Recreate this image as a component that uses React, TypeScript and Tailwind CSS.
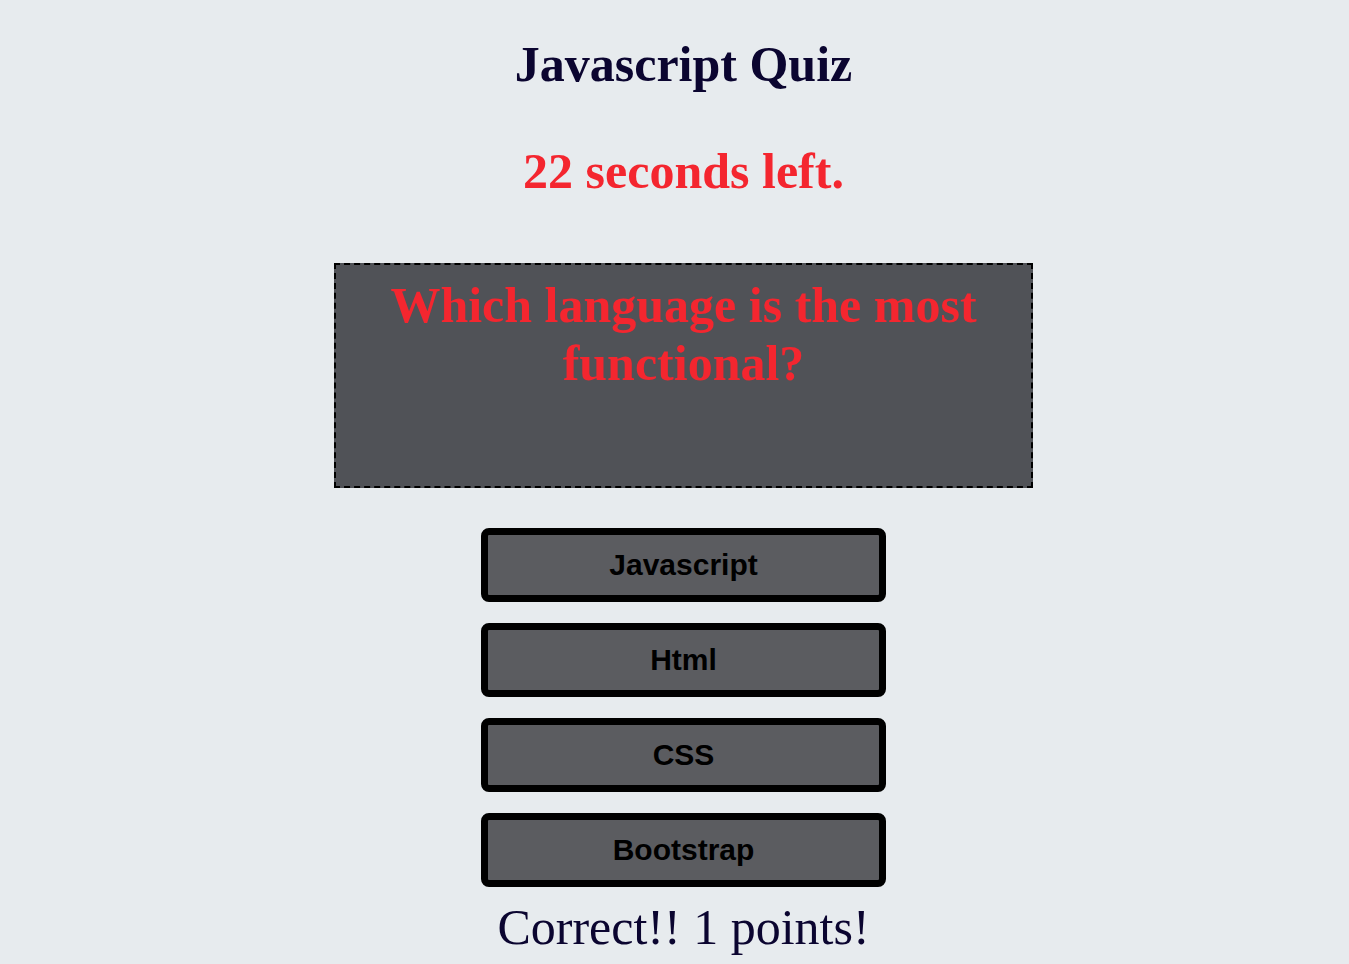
const answers = ["Javascript", "Html", "CSS", "Bootstrap"];

const serif = "font-['Liberation_Serif','Times_New_Roman',serif]";

export default function App() {
    return (
        <div className="min-h-screen bg-[#e7ebee] flex flex-col items-center pl-[18px]">
            <h1 className={`${serif} mt-[36px] text-[50px] font-bold text-[#0b0530] leading-[57px]`}>
                Javascript Quiz
            </h1>
            <h2 className={`${serif} mt-[50px] text-[50px] font-bold text-[#f4262f] leading-[57px]`}>
                22 seconds left.
            </h2>

            <div className="mt-[63px] w-[699px] h-[225px] bg-[#505257] border-2 border-dashed border-black pt-[11px] px-10">
                <p className={`${serif} text-center text-[50px] font-bold text-[#f4262f] leading-[58px]`}>
                    Which language is the most functional?
                </p>
            </div>

            <div className="mt-[40px] flex flex-col gap-[21px]">
                {answers.map((a) => (
                    <button
                        key={a}
                        className="w-[405px] h-[74px] bg-[#5b5c60] border-[7px] border-black rounded-lg flex items-center justify-center pb-[2px] font-['Liberation_Sans',Arial,sans-serif] text-[30px] font-bold text-black"
                    >
                        {a}
                    </button>
                ))}
            </div>

            <p className={`${serif} mt-[12px] text-[50px] text-[#0b0530] leading-[57px]`}>
                Correct!! 1 points!
            </p>
        </div>
    );
}
